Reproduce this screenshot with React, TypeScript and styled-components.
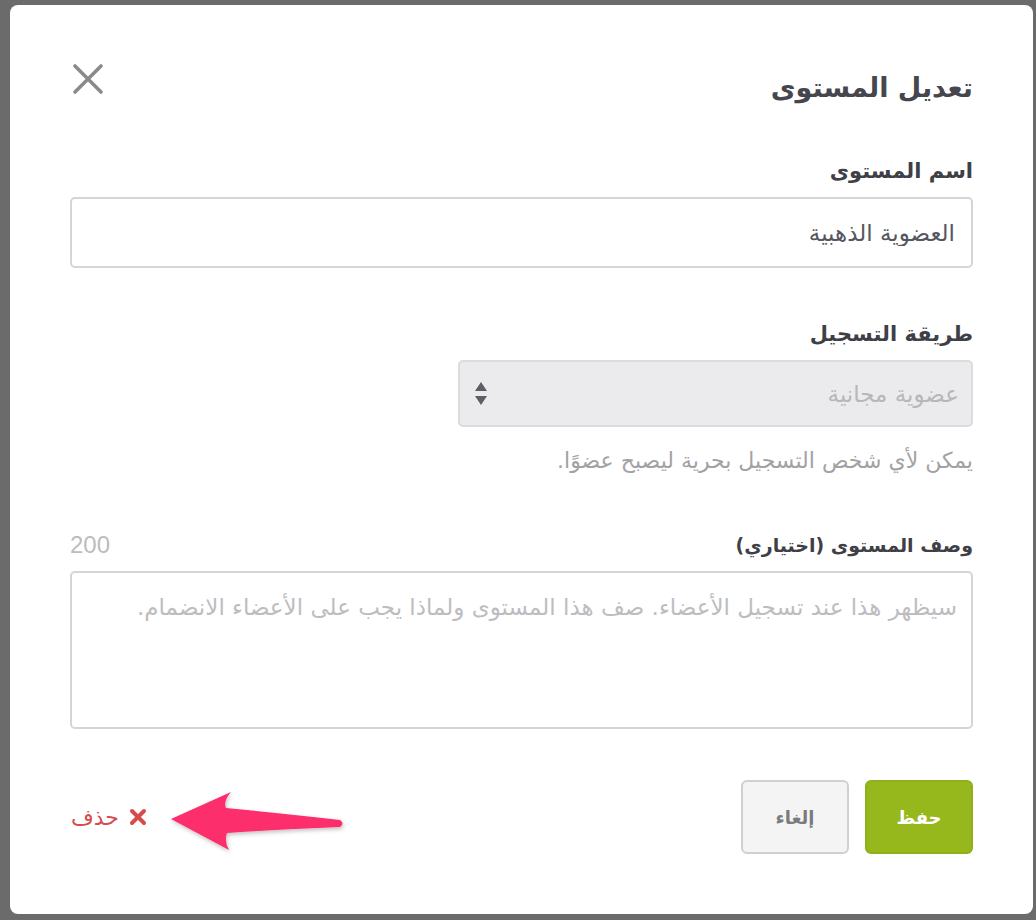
import React from 'react';
import styled, {createGlobalStyle} from "styled-components";

const GlobalStyle = createGlobalStyle`
  html, body {
    margin: 0;
    padding: 0;
    background: #6b6b6b;
  }
  * {
    box-sizing: border-box;
  }
`

const Page = styled.div`
  width: 1036px;
  height: 920px;
  padding: 5px 3px 0 10px;
  background: #6b6b6b;
  overflow: hidden;
  font-family: "DejaVu Sans", "Noto Sans", sans-serif;
`

const Modal = styled.div`
  direction: rtl;
  width: 1023px;
  height: 909px;
  background: #fff;
  border-radius: 8px;
  padding: 0 60px;
  display: flex;
  flex-direction: column;
`

const Header = styled.div`
  display: flex;
  justify-content: space-between;
  align-items: flex-start;
  height: 145px;
`

const Title = styled.h2`
  margin: 63px 0 0;
  line-height: 40px;
  font-size: 27px;
  font-weight: bold;
  color: #45464e;
`

const CloseButton = styled.button`
  border: none;
  background: none;
  padding: 0;
  margin: 57px 0 0 1px;
  width: 34px;
  height: 34px;
  display: flex;
  align-items: center;
  justify-content: center;
  cursor: pointer;
`

const Field = styled.div`
  display: flex;
  flex-direction: column;
  margin-bottom: ${p => p.gap || 0}px;
`

const LabelRow = styled.div`
  display: flex;
  justify-content: space-between;
  align-items: center;
  height: 47px;
  padding-bottom: 6px;
`

const Label = styled.label`
  font-size: ${p => p.size || 20}px;
  font-weight: bold;
  color: #3e3f47;
`

const Counter = styled.span`
  font-family: "Liberation Sans", sans-serif;
  font-size: 24px;
  color: #bcbcbc;
`

const TextInput = styled.input`
  direction: rtl;
  height: 71px;
  width: 100%;
  border: 2px solid #d5d5d5;
  border-radius: 5px;
  padding: 0 16px;
  font-family: inherit;
  font-size: 23px;
  color: #55565e;
  outline: none;
`

const SelectBox = styled.div`
  align-self: flex-start;
  width: 515px;
  height: 67px;
  background: #ebebed;
  border: 2px solid #dcdcdf;
  border-radius: 5px;
  display: flex;
  justify-content: space-between;
  align-items: center;
  padding: 0 12px 0 14px;
`

const SelectValue = styled.span`
  font-size: 23px;
  color: #b7b7ba;
`

const Help = styled.p`
  margin: 21px 0 0;
  line-height: 26px;
  font-size: 22px;
  color: #a2a2a5;
`

const TextArea = styled.textarea`
  direction: rtl;
  height: 158px;
  width: 100%;
  border: 2px solid #d5d5d5;
  border-radius: 5px;
  padding: 21px 14px;
  font-family: inherit;
  font-size: 23px;
  color: #55565e;
  resize: none;
  outline: none;

  &::placeholder {
    color: #bdbdbf;
  }
`

const Footer = styled.div`
  display: flex;
  justify-content: space-between;
  align-items: center;
  margin-top: 51px;
`

const Buttons = styled.div`
  display: flex;
  gap: 16px;
`

const Button = styled.button`
  width: 108px;
  height: 74px;
  border-radius: 6px;
  font-family: inherit;
  font-size: 18px;
  font-weight: bold;
  cursor: pointer;
  border: 2px solid ${p => p.primary ? '#8fb01a' : '#d0d0d0'};
  background: ${p => p.primary ? '#97b81d' : '#f4f4f5'};
  color: ${p => p.primary ? '#fff' : '#7a7b80'};
`

const DeleteWrap = styled.div`
  position: relative;
  margin-left: 1px;
`

const DeleteLink = styled.a`
  display: flex;
  align-items: center;
  gap: 10px;
  font-size: 22px;
  color: #d64c4c;
  text-decoration: none;
  cursor: pointer;
`

const Arrow = styled.svg`
  position: absolute;
  left: 98px;
  top: -16px;
  overflow: visible;
`

const Updown = () => (
    <svg width="14" height="28" viewBox="0 0 14 28">
        <path d="M1 11 L7 2 L13 11 Z" fill="#5d5e66"/>
        <path d="M1 16 L13 16 L7 25 Z" fill="#5d5e66"/>
    </svg>
)

export default function App() {
    return (
        <Page>
            <GlobalStyle/>
            <Modal>
                <Header>
                    <Title>تعديل المستوى</Title>
                    <CloseButton aria-label="close">
                        <svg width="32" height="32" viewBox="0 0 32 32">
                            <path d="M3 3 L29 29 M29 3 L3 29" stroke="#8a8a8c" strokeWidth="3.6" strokeLinecap="round"/>
                        </svg>
                    </CloseButton>
                </Header>

                <Field gap={45}>
                    <LabelRow>
                        <Label size={21}>اسم المستوى</Label>
                    </LabelRow>
                    <TextInput defaultValue="العضوية الذهبية"/>
                </Field>

                <Field gap={50}>
                    <LabelRow>
                        <Label size={21}>طريقة التسجيل</Label>
                    </LabelRow>
                    <SelectBox>
                        <SelectValue>عضوية مجانية</SelectValue>
                        <Updown/>
                    </SelectBox>
                    <Help>يمكن لأي شخص التسجيل بحرية ليصبح عضوًا.</Help>
                </Field>

                <Field>
                    <LabelRow>
                        <Label size={19}>وصف المستوى (اختياري)</Label>
                        <Counter>200</Counter>
                    </LabelRow>
                    <TextArea placeholder="سيظهر هذا عند تسجيل الأعضاء. صف هذا المستوى ولماذا يجب على الأعضاء الانضمام."/>
                </Field>

                <Footer>
                    <Buttons>
                        <Button primary>حفظ</Button>
                        <Button>إلغاء</Button>
                    </Buttons>
                    <DeleteWrap>
                        <DeleteLink>
                            <svg width="18" height="18" viewBox="0 0 18 18">
                                <path d="M3 3 L15 15 M15 3 L3 15" stroke="#d64c4c" strokeWidth="4" strokeLinecap="round"/>
                            </svg>
                            <span>حذف</span>
                        </DeleteLink>
                        <Arrow width="180" height="66" viewBox="0 0 180 66">
                            <defs>
                                <filter id="sh" x="-10%" y="-20%" width="130%" height="150%">
                                    <feDropShadow dx="1" dy="2" stdDeviation="2" floodColor="#000" floodOpacity="0.25"/>
                                </filter>
                            </defs>
                            <path
                                d="M2 30 L62 3 Q54 12 57 19 Q118 25 171 31 Q176 34.5 171 38 Q118 40 58 44 Q55 52 60 61 Z"
                                fill="#fc2d6c" filter="url(#sh)"/>
                        </Arrow>
                    </DeleteWrap>
                </Footer>
            </Modal>
        </Page>
    );
}
